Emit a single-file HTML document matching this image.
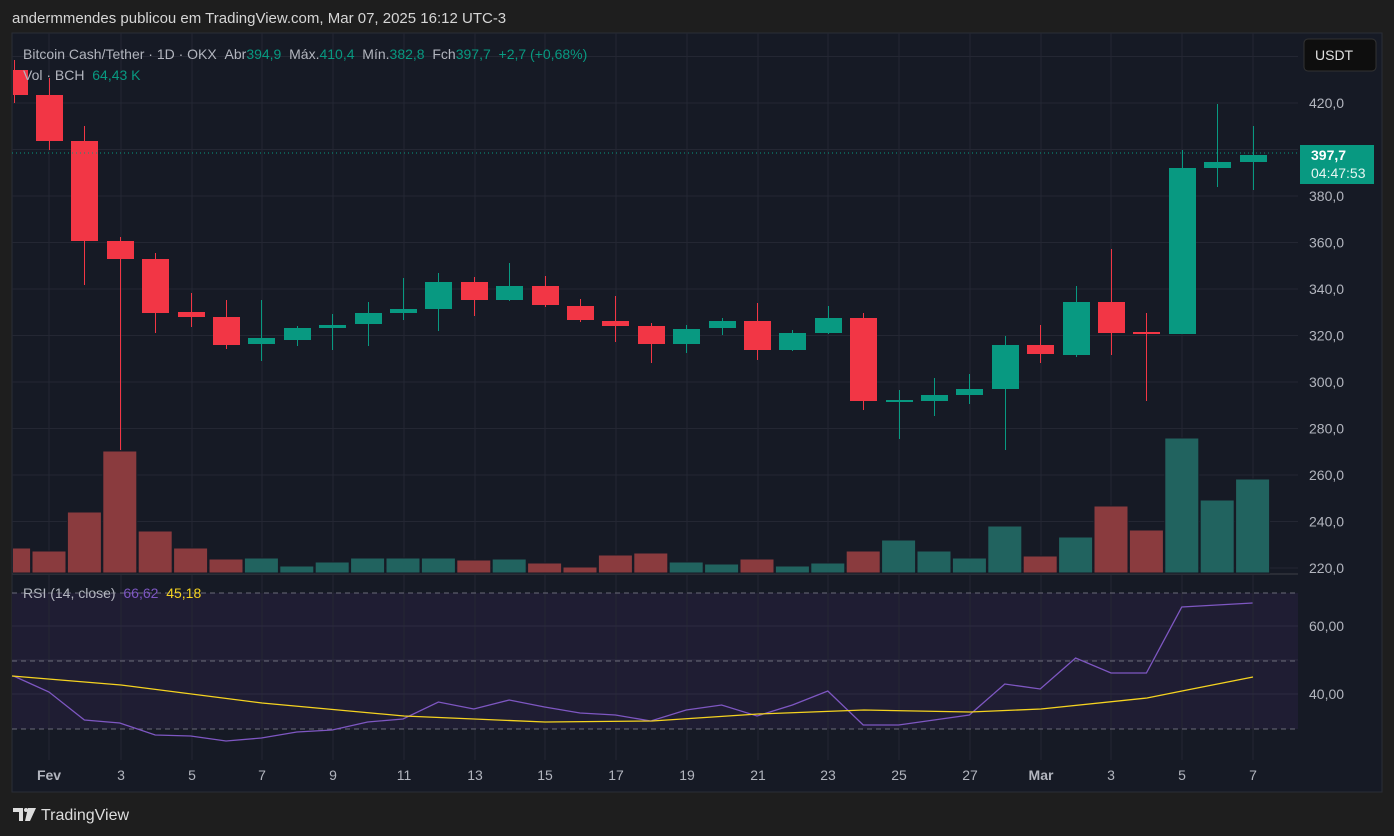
<!DOCTYPE html>
<html><head><meta charset="utf-8"><style>
body{margin:0;background:#1e1e1e;width:1394px;height:836px;overflow:hidden;font-family:"Liberation Sans",sans-serif}
#top{position:absolute;left:12px;top:10px;color:#d6d6d6;font-size:15px}
svg{position:absolute;left:0;top:0}
</style></head><body>
<div id="top">andermmendes publicou em TradingView.com, Mar 07, 2025 16:12 UTC-3</div>
<svg id="s" width="1394" height="836" font-family="Liberation Sans, sans-serif"></svg>
<script>
const s=document.getElementById('s');let h='';
h+='<defs><clipPath id="cp"><rect x="13" y="34" width="1285" height="726"/></clipPath></defs>';
h+='<rect x="12" y="33" width="1370" height="759" fill="#161a25" stroke="#2a2d36"/>';
h+='<rect x="12" y="593" width="1286" height="136" fill="#1f1d33"/>';
const dx=[49,121,192,262,333,404,475,545,616,687,758,828,899,970,1041,1111,1182,1253];
dx.forEach(x=>{h+=`<line x1="${x}" y1="33" x2="${x}" y2="760" stroke="#242733"/>`});
for(let p=220;p<=440;p+=20){const y=103+(420-p)*2.325;if(y>40&&y<573)h+=`<line x1="12" y1="${y}" x2="1298" y2="${y}" stroke="#242733"/>`;}
[626,694,660].forEach(y=>h+=`<line x1="12" y1="${y}" x2="1298" y2="${y}" stroke="#2c2a40"/>`);
[593,661,729].forEach(y=>h+=`<line x1="12" y1="${y}" x2="1298" y2="${y}" stroke="#6a6a78" stroke-dasharray="5,4"/>`);
h+='<line x1="12" y1="574" x2="1298" y2="574" stroke="#2a2d36" stroke-width="2"/>';
h+='<g clip-path="url(#cp)">';
const R='#8a3b3e',G='#21635f';
const vol=[[548,R],[551,R],[512,R],[451,R],[531,R],[548,R],[559,R],[558,G],[566,G],[562,G],[558,G],[558,G],[558,G],[560,R],[559,G],[563,R],[567,R],[555,R],[553,R],[562,G],[564,G],[559,R],[566,G],[563,G],[551,R],[540,G],[551,G],[558,G],[526,G],[556,R],[537,G],[506,R],[530,R],[438,G],[500,G],[479,G]];
vol.forEach((v,i)=>{const x=13.6+i*35.4;h+=`<rect x="${x-17}" y="${v[0]}" width="34" height="${573-v[0]}" fill="${v[1]}" stroke="#161a25" stroke-width="1"/>`});
const r='#f23645',g='#089981';
const c=[[70,95,60,103,r],[95,141,78,150,r],[141,241,126,285,r],[241,259,237,450,r],[259,313,253,333,r],[312,317,293,327,r],[317,345,300,349,r],[338,344,300,361,g],[328,340,326,346,g],[325,328,314,350,g],[313,324,302,346,g],[309,313,278,320,g],[282,309,273,331,g],[282,300,277,316,r],[286,300,263,301,g],[286,305,276,307,r],[306,320,299,322,r],[321,326,296,342,r],[326,344,323,363,r],[329,344,325,353,g],[321,328,318,335,g],[321,350,303,360,r],[333,350,330,351,g],[318,333,306,334,g],[318,401,313,410,r],[400,401,390,439,g],[395,401,378,416,g],[389,395,374,404,g],[345,389,336,450,g],[345,354,325,363,r],[302,355,286,357,g],[302,333,249,355,r],[332,334,313,401,r],[168,334,150,334,g],[162,168,104,187,g],[155,162,126,190,g]];
c.forEach((k,i)=>{const x=Math.round(13.6+i*35.4);h+=`<line x1="${x+.5}" y1="${k[2]}" x2="${x+.5}" y2="${k[3]}" stroke="${k[4]}"/><rect x="${x-13}" y="${k[0]}" width="27" height="${Math.max(2,k[1]-k[0])}" fill="${k[4]}"/>`});
h+='</g>';
h+='<line x1="12" y1="153" x2="1298" y2="153" stroke="#089981" stroke-dasharray="1,3"/>';
const rp=[676,692,720,723,735,736,741,738,732,730,722,719,702,709,700,707,713,715,721,710,705,716,705,691,725,725,720,715,684,689,658,673,673,607,605,603];
h+=`<polyline fill="none" stroke="#7e57c2" stroke-width="1.3" points="${rp.map((y,i)=>(13.6+i*35.4)+','+y).join(' ')}"/>`;
const yp=[[12,676],[121,685],[262,703],[404,716],[545,722],[652,721],[758,714],[864,710],[970,712],[1041,709],[1147,698],[1182,691],[1253,677]];
h+=`<polyline fill="none" stroke="#f5d320" stroke-width="1.3" points="${yp.map(p=>p.join(',')).join(' ')}"/>`;
for(let p=220;p<=420;p+=20){const y=103+(420-p)*2.325;if(p!=400)h+=`<text x="1309" y="${y+5}" fill="#b2b5be" font-size="14">${p},0</text>`;}
h+='<text x="1309" y="631" fill="#b2b5be" font-size="14">60,00</text><text x="1309" y="699" fill="#b2b5be" font-size="14">40,00</text>';
h+='<rect x="1300" y="145" width="74" height="39" fill="#089981"/><text x="1311" y="160" fill="#fff" font-size="14" font-weight="bold">397,7</text><text x="1311" y="178" fill="#e6f5f1" font-size="14">04:47:53</text>';
h+='<rect x="1304" y="39" width="72" height="32" rx="4" fill="#0e0e0e" stroke="#333"/><text x="1315" y="60" fill="#e0e0e0" font-size="14">USDT</text>';
const lb=['Fev','3','5','7','9','11','13','15','17','19','21','23','25','27','Mar','3','5','7'];
lb.forEach((t,i)=>h+=`<text x="${dx[i]}" y="780" text-anchor="middle" fill="#b2b5be" font-size="14" ${t=='Fev'||t=='Mar'?'font-weight="bold"':''}>${t}</text>`);
const sp='\u00a0';
h+=`<text x="23" y="59" font-size="14" fill="#b2b5be">Bitcoin Cash/Tether · 1D · OKX${sp}${sp}Abr<tspan fill="#089981">394,9</tspan>${sp}${sp}Máx.<tspan fill="#089981">410,4</tspan>${sp}${sp}Mín.<tspan fill="#089981">382,8</tspan>${sp}${sp}Fch<tspan fill="#089981">397,7${sp}${sp}+2,7 (+0,68%)</tspan></text>`;
h+=`<text x="23" y="80" font-size="14" fill="#b2b5be">Vol · BCH${sp}${sp}<tspan fill="#089981">64,43 K</tspan></text>`;
h+=`<text x="23" y="598" font-size="14" fill="#b2b5be">RSI (14, close)${sp}${sp}<tspan fill="#7e57c2">66,62</tspan>${sp}${sp}<tspan fill="#f5d320">45,18</tspan></text>`;
h+='<path d="M13 808h10v13h-4v-9h-6z" fill="#ddd"/><circle cx="26" cy="810" r="2" fill="#ddd"/><path d="M28 808h8l-6 13h-5z" fill="#ddd"/>';
h+='<text x="41" y="820" font-size="16" fill="#ddd">TradingView</text>';
s.innerHTML=h;
</script>
</body></html>
